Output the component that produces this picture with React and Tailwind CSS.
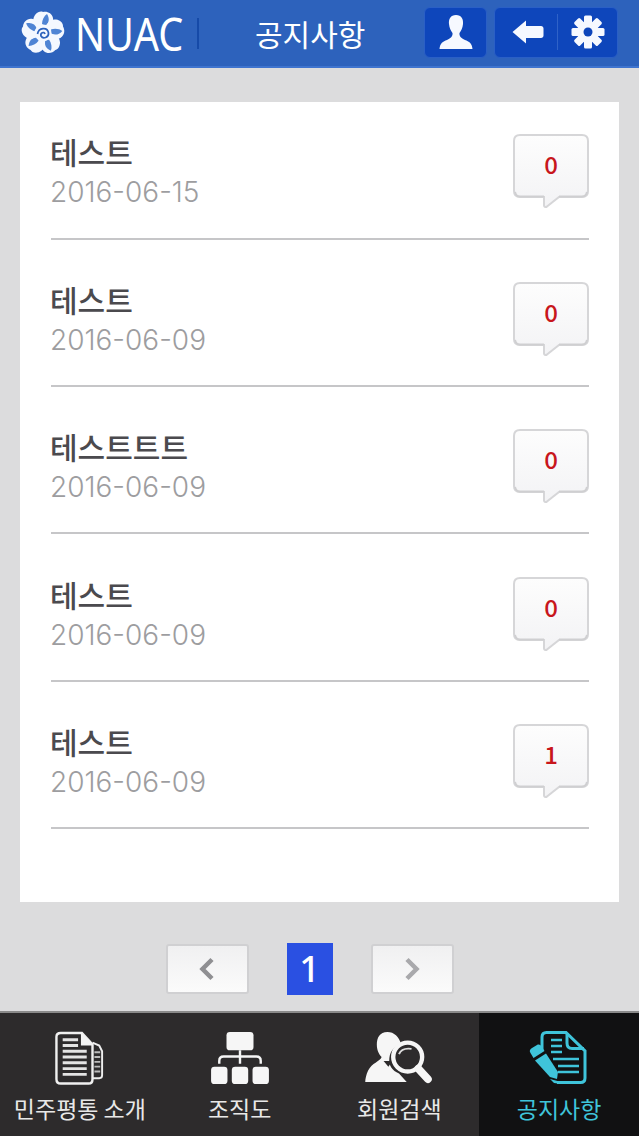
const KR = '"Noto Sans CJK KR","Noto Sans",sans-serif';

function Flower() {
  const petals = [0, 72, 144, 216, 288];
  return (
    <svg width="44" height="44" viewBox="-22 -22 44 44" className="shrink-0">
      {petals.map((a) => (
        <g key={a} transform={`rotate(${a})`}>
          <path d="M0 -2C-9 -6 -12 -12 -8 -18C-5 -21.500 -2 -22 0 -21C4 -22 9 -20 10 -15C11 -9 6 -5 0 -2Z" fill="#f4f8ff" />
          <path d="M2 -7C6 -10 7 -14 4 -19C1 -17 -1 -13 -1 -9Z" fill="#4f84d4" />
        </g>
      ))}
      <circle r="8.500" fill="#f4f8ff" />
      <path d="M-5.500 1C-4.500 -5.500 4.500 -6.500 5.500 0C6 4.500 0 6.500 -2 3C-3 0 1 -2 2 1" fill="none" stroke="#2c62bd" strokeWidth="1.700" />
    </svg>
  );
}

function Header() {
  return (
    <header className="h-[68px] shrink-0 bg-[#2d62bc] border-b-2 border-[#3f74cf] flex items-center pl-[21px]">
      <Flower />
      <span className="ml-[10px] w-[114px] text-white text-[45px] leading-none origin-left scale-x-[.88] whitespace-nowrap" style={{ fontFamily: '"Noto Sans",sans-serif' }}>NUAC</span>
      <span className="ml-[8px] w-[2px] h-[31px] bg-[#164aa8]" />
      <h1 className="ml-[56px] text-white leading-none w-[110px] whitespace-nowrap text-[30px]" style={{ fontFamily: KR }}>공지사항</h1>
      <div className="ml-[59px] flex items-center gap-[7px] mb-[2px]">
        <button className="w-[63px] h-[51px] rounded-[6px] bg-[#0e46bb] border border-[#2a5fc6] flex items-center justify-center">
          <svg width="34" height="36" viewBox="0 0 34 36"><path d="M17 1C11.500 1 9.500 5 10 10C10.300 14 12 17 13.500 19C14 22 12 24 8 26C4 27.500 1 29 0.500 35H33.500C33 29 30 27.500 26 26C22 24 20 22 20.500 19C22 17 23.700 14 24 10C24.500 5 22.500 1 17 1Z" fill="#f6f9ff" /></svg>
        </button>
        <div className="w-[124px] h-[51px] rounded-[6px] bg-[#0e46bb] border border-[#2a5fc6] flex items-center">
          <span className="w-[62px] flex justify-center pl-[3px]">
            <svg width="32" height="26" viewBox="0 0 32 26"><path d="M0.500 13L14 1.500V7H29C30.500 7 31.500 8 31.500 9.500V16.500C31.500 18 30.500 19 29 19H14V24.500Z" fill="#f6f9ff" /></svg>
          </span>
          <span className="w-px h-[36px] bg-[#2f62c8]" />
          <span className="flex-1 flex justify-center">
            <svg width="34" height="34" viewBox="-17 -17 34 34">
              {[0, 45, 90, 135, 180, 225, 270, 315].map((a) => <rect key={a} x="-4" y="-16.500" width="8" height="9" rx="1.500" fill="#f6f9ff" transform={`rotate(${a})`} />)}
              <circle r="10.500" fill="#f6f9ff" />
              <circle r="4.500" fill="#0e46bb" />
            </svg>
          </span>
        </div>
      </div>
    </header>
  );
}

function Bubble({ n }) {
  return (
    <div className="relative w-[76px] h-[75px]">
      <svg className="absolute inset-0" width="76" height="75" viewBox="0 0 76 75">
        <defs><linearGradient id="bub" x1="0" y1="0" x2="0" y2="1"><stop offset="0" stopColor="#fdfdfd" /><stop offset="1" stopColor="#f3f3f5" /></linearGradient></defs>
        <path d="M7 1H69C73 1 75 3 75 7V57C75 61 73 63 69 63H46L34 72.500C33 73.500 31 73 31 71.500V63H7C3 63 1 61 1 57V7C1 3 3 1 7 1Z" fill="url(#bub)" stroke="#d6d6d8" strokeWidth="2" />
        <path d="M2 58C3 61.500 4 62.500 7 62.500H31M46 62.500H69C72 62.500 73 61.500 74 58" fill="none" stroke="#cfcfd1" strokeWidth="2" />
      </svg>
      <span className="absolute left-0 right-0 top-[16px] text-center text-[#c8161c] text-[24px] leading-[28px] font-medium" style={{ fontFamily: KR }}>{n}</span>
    </div>
  );
}

function Row({ title, date, n, first }) {
  return (
    <li className={`${first ? 'h-[137.500px] pt-[32px]' : 'h-[147.400px] pt-[42.400px]'} border-b-2 border-[#c6c6c8] flex justify-between items-start`}>
      <div className="-mt-[3px]">
        <p className="text-[30px] leading-[40px] font-medium text-[#4b4a4e] -ml-px" style={{ fontFamily: KR }}>{title}</p>
        <p className="text-[28px] leading-[40px] font-light text-[#9d9da0] mt-[1px] -ml-px" style={{ fontFamily: 'Inter,sans-serif' }}>{date}</p>
      </div>
      <Bubble n={n} />
    </li>
  );
}

function PageBtn({ dir }) {
  return (
    <button className="w-[83px] h-[50px] rounded-[3px] bg-gradient-to-b from-[#f0f0f1] to-[#fbfbfb] border-2 border-[#d0d0d2] flex items-center justify-center">
      <svg width="16" height="24" viewBox="0 0 16 24"><path d={dir === 'l' ? 'M13 2.500L3.500 12L13 21.500' : 'M3 2.500L12.500 12L3 21.500'} fill="none" stroke={dir === 'l' ? '#8f8f92' : '#a9a9ac'} strokeWidth="4.500" /></svg>
    </button>
  );
}

function NavItem({ icon, label, active }) {
  return (
    <div className={`w-[160px] flex flex-col items-center ${active ? 'bg-[#111112]' : ''}`}>
      <div className="h-[80px] pt-[18px] flex items-start justify-center">{icon}</div>
      <span className={`text-[23px] leading-[30px] whitespace-nowrap ${active ? 'text-[#3fc4da]' : 'text-[#e8e8e8]'}`} style={{ fontFamily: KR }}>{label}</span>
    </div>
  );
}

const DocIcon = (
  <svg width="50" height="54" viewBox="0 0 52 56" fill="none" className="ml-px">
    <path d="M39 12L46 15L49 21V46C49 48 48 49 46 49H39" stroke="#eee" strokeWidth="2" />
    <path d="M41 22H47M41 27H47M41 32H47M41 37H47M41 42H47" stroke="#bbb" strokeWidth="2" />
    <path d="M6 2H28L39 14V50C39 53 37.500 54.500 35 54.500H6C3 54.500 1.500 53 1.500 50V6C1.500 3.500 3 2 6 2Z" fill="#2d2b2c" stroke="#f0f0f0" strokeWidth="2.500" />
    <path d="M27 1L40 15H27Z" fill="#f4f4f4" />
    <path d="M8 9H24M8 15H24M8 21H33M8 27H33M8 33H33M8 39H33M8 45H33" stroke="#e4e4e4" strokeWidth="3" />
  </svg>
);

const OrgIcon = (
  <svg width="58" height="54" viewBox="0 0 60 56" fill="#f6f6f6">
    <rect x="16" y="1" width="28" height="19" rx="3.500" />
    <rect x="0" y="37" width="17" height="18" rx="3.500" />
    <rect x="21.500" y="37" width="17" height="18" rx="3.500" />
    <rect x="43" y="37" width="17" height="18" rx="3.500" />
    <path d="M8.500 34V31C8.500 28 10 26.500 13 26.500H47C50 26.500 51.500 28 51.500 31V34M30 20V34" fill="none" stroke="#f6f6f6" strokeWidth="2.500" />
  </svg>
);

const SearchIcon = (
  <svg width="70" height="54" viewBox="0 0 72 56">
    <path d="M24 1C16 1 13 7 13 14C13 21 16 25 18 27C16 32 8 33 4 41C2 45 1 50 1 53H44L36 44C29 41 25 36 26 28C27 20 32 16 38 13C36 6 31 1 24 1Z" fill="#f6f6f6" />
    <path d="M20 31L25 37L29 31" fill="#2d2b2c" />
    <circle cx="45" cy="27" r="15" fill="#2d2b2c" stroke="#f6f6f6" strokeWidth="4.500" />
    <path d="M36 24C38 19 42 17.500 49 18.500" stroke="#ddd" strokeWidth="2" fill="none" />
    <path d="M56 39L66 50" stroke="#f6f6f6" strokeWidth="8" strokeLinecap="round" />
  </svg>
);

const NoticeIcon = (
  <svg width="58" height="53" viewBox="0 0 58 53" fill="none" className="-ml-[3px]">
    <path d="M13 19V6C13 3 15 1.500 17.500 1.500H37L56 20V47C56 50 54 51.500 51.500 51.500H28" stroke="#3fc4da" strokeWidth="3" />
    <path d="M38 2V12C38 15.500 40 17.500 43 17.500H55" stroke="#3fc4da" strokeWidth="3" />
    <path d="M22 9H33M22 15H33M22 21H33M24 28H50M29 35H50M29 41H50" stroke="#3fc4da" strokeWidth="2.500" />
    <path d="M1.500 22C0 20 1 18 3 17L8 14C10 13 12 14 13 16L15.500 20L4.500 27Z" fill="#3fc4da" />
    <path d="M6 29.500L17 22.500L29 41L28 48L21 46Z" fill="#3fc4da" />
    <path d="M21 48L28.500 50L28.500 52.500L25 52Z" fill="#3fc4da" />
  </svg>
);

export default function App() {
  const rows = [
    ['테스트', '2016-06-15', 0],
    ['테스트', '2016-06-09', 0],
    ['테스트트트', '2016-06-09', 0],
    ['테스트', '2016-06-09', 0],
    ['테스트', '2016-06-09', 1],
  ];
  return (
    <div className="w-[639px] h-[1136px] flex flex-col bg-[#dcdcdd] overflow-hidden">
      <Header />
      <main className="flex-1 pt-[34px] px-[20px]">
        <section className="h-[800px] bg-white pl-[31px] pr-[30px]">
          <ul>
            {rows.map((r, i) => <Row key={i} title={r[0]} date={r[1]} n={r[2]} first={i === 0} />)}
          </ul>
        </section>
        <div className="mt-[41px] pr-[20px] flex items-center justify-center gap-[38px]">
          <PageBtn dir="l" />
          <span className="w-[46px] h-[52px] bg-[#2a50e2] text-white text-[36px] leading-[52px] text-center font-medium" style={{ fontFamily: '"Noto Sans",sans-serif' }}>1</span>
          <PageBtn dir="r" />
        </div>
      </main>
      <nav className="h-[125px] shrink-0 bg-[#2d2b2c] border-t-2 border-[#8a8a8a] flex overflow-hidden">
        <NavItem icon={DocIcon} label="민주평통 소개" />
        <NavItem icon={OrgIcon} label="조직도" />
        <NavItem icon={SearchIcon} label="회원검색" />
        <NavItem icon={NoticeIcon} label="공지사항" active />
      </nav>
    </div>
  );
}
